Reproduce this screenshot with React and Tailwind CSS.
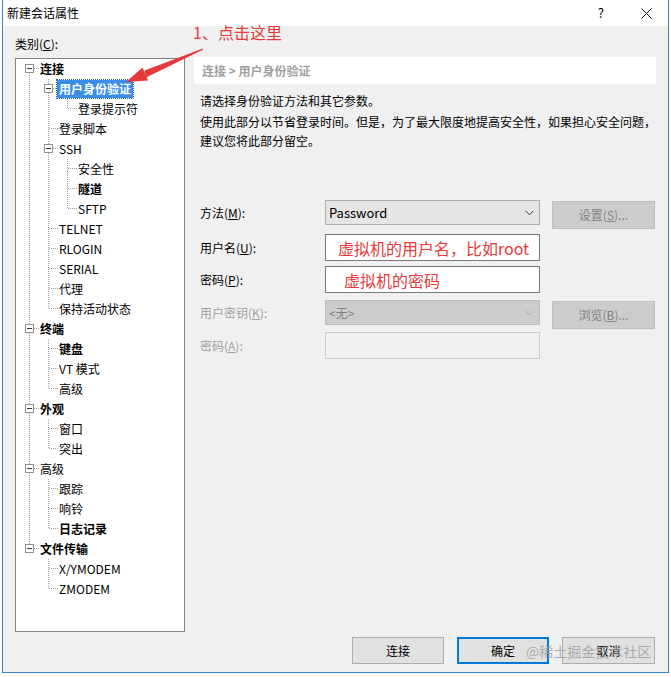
import React from "react";

const NODES = [
  { t: "连接", l: 0, b: true, k: true },
  { t: "用户身份验证", l: 1, b: true, k: true, sel: true },
  { t: "登录提示符", l: 2 },
  { t: "登录脚本", l: 1 },
  { t: "SSH", l: 1, k: true },
  { t: "安全性", l: 2 },
  { t: "隧道", l: 2, b: true },
  { t: "SFTP", l: 2 },
  { t: "TELNET", l: 1 },
  { t: "RLOGIN", l: 1 },
  { t: "SERIAL", l: 1 },
  { t: "代理", l: 1 },
  { t: "保持活动状态", l: 1 },
  { t: "终端", l: 0, b: true, k: true },
  { t: "键盘", l: 1, b: true },
  { t: "VT 模式", l: 1 },
  { t: "高级", l: 1 },
  { t: "外观", l: 0, b: true, k: true },
  { t: "窗口", l: 1 },
  { t: "突出", l: 1 },
  { t: "高级", l: 0, k: true },
  { t: "跟踪", l: 1 },
  { t: "响铃", l: 1 },
  { t: "日志记录", l: 1, b: true },
  { t: "文件传输", l: 0, b: true, k: true },
  { t: "X/YMODEM", l: 1 },
  { t: "ZMODEM", l: 1 },
];

function continues(i, level) {
  for (let j = i + 1; j < NODES.length; j++) {
    if (NODES[j].l < level) return false;
    if (NODES[j].l === level) return true;
  }
  return false;
}

const LINE = "#a0a0a0";

function Guide({ top, bottom, horiz, box }) {
  return (
    <svg width="19" height="20" className="shrink-0 block" shapeRendering="crispEdges">
      {top && <line x1="9.5" y1="0" x2="9.5" y2="10" stroke={LINE} strokeDasharray="1 1" />}
      {bottom && <line x1="9.5" y1="10" x2="9.5" y2="20" stroke={LINE} strokeDasharray="1 1" />}
      {horiz && <line x1="10" y1="9.5" x2="19" y2="9.5" stroke={LINE} strokeDasharray="1 1" />}
      {box && (
        <g>
          <rect x="5.5" y="5.5" width="8" height="8" fill="#ffffff" stroke="#919191" />
          <line x1="7" y1="9.5" x2="12" y2="9.5" stroke="#333333" />
        </g>
      )}
    </svg>
  );
}

function TreeRow({ n, i }) {
  const cells = [];
  for (let k = 0; k < n.l; k++) {
    const pipe = continues(i, k);
    cells.push(<Guide key={k} top={pipe} bottom={pipe} />);
  }
  const next = continues(i, n.l);
  cells.push(<Guide key="self" top={i !== 0} bottom={next} horiz box={n.k} />);
  return (
    <div className="flex h-5 items-center">
      {cells}
      {n.sel ? (
        <span className="ml-[-1px] h-[18px] px-[2px] leading-[18px] bg-[#3a8ee6] text-white font-bold whitespace-nowrap outline outline-1 outline-dotted outline-[#1f5fa8]">
          {n.t}
        </span>
      ) : (
        <span className={"ml-[1px] leading-5 whitespace-nowrap " + (n.b ? "font-bold" : "")}>
          {n.t}
        </span>
      )}
    </div>
  );
}

function Chevron({ color }) {
  return (
    <svg width="9" height="6" viewBox="0 0 9 6" className="block">
      <polyline points="0.5,0.8 4.5,4.8 8.5,0.8" fill="none" stroke={color} strokeWidth="1" />
    </svg>
  );
}

function Btn({ children, disabled, primary, w = "w-[103px]", h = "h-[28px]" }) {
  const cls = primary
    ? "border-2 border-[#0078d7] bg-[#e1e1e1] text-black"
    : disabled
    ? "border border-[#bfbfbf] bg-[#cccccc] text-[#838383]"
    : "border border-[#adadad] bg-[#e1e1e1] text-black";
  return (
    <div className={`${w} ${h} ${cls} flex items-center justify-center shrink-0`}>{children}</div>
  );
}

export default function App() {
  return (
    <div className="relative w-[671px] h-[677px] bg-white overflow-hidden text-[12px] text-black font-['Microsoft_YaHei','Noto_Sans_CJK_SC',sans-serif]">
      <div className="ml-[2px] w-[667px] h-[673px] border-x border-b border-[#3a7fd0] flex flex-col">
        {/* title bar */}
        <div className="h-[26px] shrink-0 bg-white flex items-center pl-[4px]">
          <span className="leading-4">新建会话属性</span>
          <span className="ml-auto mr-[37px] text-[13px] leading-4">?</span>
          <svg width="11" height="11" viewBox="0 0 11 11" className="mr-[16px] block">
            <path d="M0.5 0.5 L10.5 10.5 M10.5 0.5 L0.5 10.5" stroke="#111" strokeWidth="1" />
          </svg>
        </div>
        {/* body */}
        <div className="flex-1 bg-[#f0f0f0] flex flex-col">
          <div className="flex pl-[12px]">
            {/* left column */}
            <div className="w-[170px] shrink-0 flex flex-col">
              <div className="mt-[10px] leading-4 h-4">
                类别(<span className="underline">C</span>):
              </div>
              <div className="mt-[6px] h-[574px] border border-[#828282] bg-white pl-[4px]">
                {NODES.map((n, i) => (
                  <TreeRow key={i} n={n} i={i} />
                ))}
              </div>
            </div>
            {/* right column */}
            <div className="ml-[9px] w-[462px] shrink-0 flex flex-col">
              <div className="mt-[31px] h-[27px] bg-white flex items-center pl-[8px] font-bold text-[#a0a0a0]">
                连接 &gt; 用户身份验证
              </div>
              <div className="pl-[6px]">
                <p className="mt-[7px] leading-[19px] whitespace-nowrap">请选择身份验证方法和其它参数。</p>
                <p className="mt-[2px] leading-[19px] whitespace-nowrap">
                  使用此部分以节省登录时间。但是，为了最大限度地提高安全性，如果担心安全问题，
                  <br />
                  建议您将此部分留空。
                </p>

                <div className="mt-[50px] flex flex-col">
                  {/* row 1 */}
                  <div className="h-[34px] flex items-start">
                    <div className="w-[125px] shrink-0 h-[25px] flex items-center">
                      方法(<span className="underline">M</span>):
                    </div>
                    <div className="w-[215px] shrink-0 h-[25px] border border-[#adadad] bg-[#e5e5e5] flex items-center pl-[3px] pr-[5px]">
                      <span className="text-[13px]">Password</span>
                      <span className="ml-auto"><Chevron color="#333" /></span>
                    </div>
                    <div className="ml-[12px] mt-[1px] shrink-0">
                      <Btn disabled>
                        设置(<span className="underline">S</span>)...
                      </Btn>
                    </div>
                  </div>
                  {/* row 2 */}
                  <div className="h-[32px] flex items-start">
                    <div className="w-[125px] shrink-0 h-[27px] flex items-center">
                      用户名(<span className="underline">U</span>):
                    </div>
                    <div className="w-[215px] shrink-0 h-[27px] border border-[#7a7a7a] bg-white flex items-center pl-[12px] text-[16px] text-[#e5393b] whitespace-nowrap">
                      虚拟机的用户名，比如root
                    </div>
                  </div>
                  {/* row 3 */}
                  <div className="h-[34px] flex items-start">
                    <div className="w-[125px] shrink-0 h-[27px] flex items-center">
                      密码(<span className="underline">P</span>):
                    </div>
                    <div className="w-[215px] shrink-0 h-[27px] border border-[#7a7a7a] bg-white flex items-center pl-[18px] text-[16px] text-[#e5393b] whitespace-nowrap">
                      虚拟机的密码
                    </div>
                  </div>
                  {/* row 4 */}
                  <div className="h-[32px] flex items-start text-[#a0a0a0]">
                    <div className="w-[125px] shrink-0 h-[25px] flex items-center">
                      用户密钥(<span className="underline">K</span>):
                    </div>
                    <div className="w-[215px] shrink-0 h-[25px] border border-[#bfbfbf] bg-[#cccccc] flex items-center pl-[3px] pr-[5px] text-[#838383]">
                      <span>&lt;无&gt;</span>
                      <span className="ml-auto"><Chevron color="#a8a8a8" /></span>
                    </div>
                    <div className="ml-[12px] mt-[1px] shrink-0">
                      <Btn disabled>
                        浏览(<span className="underline">B</span>)...
                      </Btn>
                    </div>
                  </div>
                  {/* row 5 */}
                  <div className="h-[27px] flex items-start text-[#a0a0a0]">
                    <div className="w-[125px] shrink-0 h-[27px] flex items-center">
                      密码(<span className="underline">A</span>):
                    </div>
                    <div className="w-[215px] shrink-0 h-[27px] border border-[#cccccc] bg-[#f0f0f0]" />
                  </div>
                </div>
              </div>
            </div>
          </div>
          {/* bottom buttons */}
          <div className="mt-[5px] flex justify-end gap-[13px] pr-[13px]">
            <Btn w="w-[92px]" h="h-[27px]">连接</Btn>
            <Btn w="w-[92px]" h="h-[27px]" primary>确定</Btn>
            <Btn w="w-[93px]" h="h-[27px]">取消</Btn>
          </div>
        </div>
      </div>

      {/* annotation text */}
      <div className="absolute left-[193px] top-[21px] text-[16px] leading-[22px] text-[#e5393b] whitespace-nowrap">
        1、点击这里
      </div>
      {/* annotation arrow */}
      <svg className="absolute left-0 top-0 pointer-events-none" width="671" height="677">
        <polygon points="203.2,49.5 202.8,48.5 144.5,70.5 146.1,77.5" fill="#e5393b" />
        <polygon points="126,82 142.5,67.6 148.1,80.4" fill="#e5393b" />
      </svg>
      {/* watermark */}
      <div className="absolute left-[526px] top-[641px] text-[14px] leading-[20px] text-[#9a9a9a]/80 whitespace-nowrap">
        @稀土掘金技术社区
      </div>
    </div>
  );
}
